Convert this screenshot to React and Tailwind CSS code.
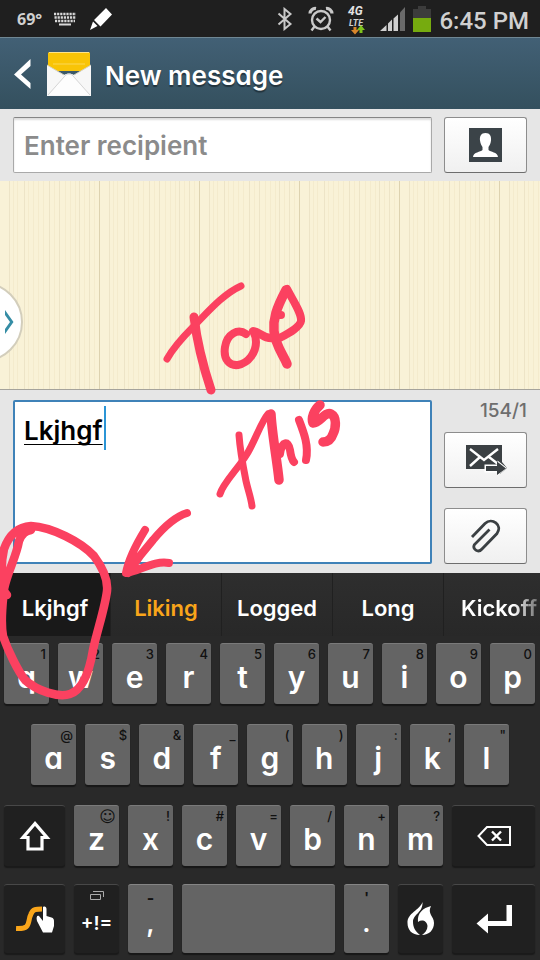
import React, { useState } from "react";

const SUGGESTIONS = ["Lkjhgf", "Liking", "Logged", "Long", "Kickoff"];

const ROW_ONE = [
  ["q", "1"], ["w", "2"], ["e", "3"], ["r", "4"], ["t", "5"],
  ["y", "6"], ["u", "7"], ["i", "8"], ["o", "9"], ["p", "0"],
];
const ROW_TWO = [
  ["a", "@"], ["s", "$"], ["d", "&"], ["f", "_"], ["g", "("],
  ["h", ")"], ["j", ":"], ["k", ";"], ["l", '"'],
];
const ROW_THREE = [
  ["z", "☺"], ["x", "!"], ["c", "#"], ["v", "="], ["b", "/"], ["n", "+"], ["m", "?"],
];

function StatusBar() {
  return (
    <div className="flex h-[37px] items-center bg-[#1f1f1f] pl-[17px] pr-[11px] text-[#d0d0d0]">
      <span className="w-[36px] font-['Liberation_Sans_Narrow','Open_Sans',sans-serif] text-base font-bold">69°</span>
      <svg className="mr-[12px]" width="24" height="14" viewBox="0 0 24 14" fill="none" stroke="#d8d8d8">
        <path d="M1 2h22M1.500 5.500h21M2 9h20" strokeWidth="2.400" strokeDasharray="2.200 .9" />
        <path d="M6 12.500h12" strokeWidth="2" />
      </svg>
      <svg width="24" height="24" viewBox="0 0 24 24" fill="#fff">
        <path d="M17 1l6 6.500-11.500 12L5 13zM4 14.500L8.500 19 1 23z" />
      </svg>
      <div className="ml-auto flex items-center">
        <svg className="mr-[15px]" width="16" height="24" viewBox="0 0 16 24" fill="none" stroke="#c9c9c9" strokeWidth="2">
          <path d="M1.500 6.500l12 10.500-6 5V2l6 5-12 10.500" />
        </svg>
        <svg className="mr-[13px]" width="26" height="26" viewBox="0 0 26 26" fill="none" stroke="#c9c9c9" strokeWidth="2.400">
          <circle cx="13" cy="14" r="9" />
          <path d="M8.500 12.500l4 3.500 5-5M6.500 20.500l-3 4M19.500 20.500l3 4" />
          <path d="M2 7.500c0-3 3-5.500 6-5M24 7.500c0-3-3-5.500-6-5" strokeWidth="3.200" />
        </svg>
        <svg className="mr-[13px]" width="20" height="34" viewBox="0 0 20 34">
          <text x="1" y="13" fontSize="12" fontWeight="700" fontStyle="italic" fill="#e2e2e2" fontFamily="Roboto, sans-serif">4G</text>
          <text x="2" y="24" fontSize="9" fontWeight="700" fontStyle="italic" fill="#d0d0d0" fontFamily="Roboto, sans-serif">LTE</text>
          <path d="M6.500 25h3v3H12l-4 4.500L4 28h2.500z" fill="#d9862b" />
          <path d="M12.500 31v-3H10l4-5 4 5h-2.500v3z" fill="#7fc21c" />
        </svg>
        <svg className="mr-[7px]" width="26" height="26" viewBox="0 0 26 26" fill="#cfcfcf">
          <path d="M0 25l6.500-6v6zM8 17.500l4-4V25H8zM13.500 12.500l4.500-4V25h-4.500z" />
          <path d="M20 6.500L25 1v24h-5z" fill="#6a6a6a" />
        </svg>
        <svg className="mr-[8px]" width="18" height="28" viewBox="0 0 18 28">
          <path d="M0 4h5V1h8v3h5v9H0z" fill="#3c3c3c" />
          <path d="M0 13h18v14H0z" fill="#76ab0f" />
        </svg>
        <span className="pt-[4px] font-[Roboto,sans-serif] text-2xl font-medium leading-8">6:45 PM</span>
      </div>
    </div>
  );
}

function Header() {
  return (
    <header className="flex h-[72px] items-center border-t border-[#6f8793] bg-linear-to-b from-[#426075] to-[#34505e] pl-[13px]">
      <button aria-label="Back" className="mr-[15px]">
        <svg width="19" height="32" viewBox="0 0 19 32" fill="#fff">
          <path d="M17.500 1v7L8 16.500l9.500 8.500v6L1 16.500z" />
        </svg>
      </button>
      <svg width="44" height="46" viewBox="0 0 44 46">
        <path d="M2 1h40l1 1v18H1V2z" fill="#f9c406" />
        <path d="M2 1h40v1H2z" fill="#ffe489" />
        <path d="M6 13h32" stroke="#fbd857" />
        <path d="M0 14l17 10c3-2 7-2 10 0l17-10v31H0z" fill="#f7f7f7" />
        <path d="M1 44l16-18c3-4 7-4 10 0l16 18" fill="#fdfdfd" stroke="#d5d5d5" />
        <path d="M0 14l17 10M44 14L27 24" stroke="#d6d2c0" />
      </svg>
      <h1 className="ml-[14px] pt-[4px] text-[26px] font-semibold text-white [text-shadow:0_2px_1px_rgb(0_0_0/0.4)]">New message</h1>
    </header>
  );
}

function SideButton({ label, children }) {
  return (
    <button
      aria-label={label}
      className="flex h-14 w-[83px] shrink-0 items-center justify-center rounded-[3px] border border-[#8d8d8d] border-b-[#6d6d6d] bg-linear-to-b from-white to-[#f0f0f0]"
    >
      {children}
    </button>
  );
}

function Conversation() {
  return (
    <main className="relative h-[208px] overflow-hidden bg-[#f9f2d7]">
      <svg className="h-full w-full" aria-hidden="true">
        <defs>
          <pattern id="stripes" width="100" height="208" patternUnits="userSpaceOnUse">
            <path d="M9.500 0v208M24.500 0v208M49.500 0v208M59.500 0v208M79.500 0v208M89.500 0v208" stroke="#ede4c7" />
            <path d="M13.500 0v208M17.500 0v208M28.500 0v208M33.500 0v208M38.500 0v208M43.500 0v208M54.500 0v208M65.500 0v208M70.500 0v208M75.500 0v208M84.500 0v208M94.500 0v208" stroke="#f4ebcd" />
            <path d="M99.500 0v208" stroke="#ddd2b0" />
          </pattern>
        </defs>
        <rect width="100%" height="100%" fill="url(#stripes)" />
      </svg>
      <button
        aria-label="Open panel"
        className="absolute -left-[57px] top-[101px] flex h-20 w-20 items-center justify-end rounded-full border-2 border-[#d3cebc] bg-white pr-[7px]"
      >
        <svg width="10" height="26" viewBox="0 0 10 26" fill="#358da5">
          <path d="M1 1l8.500 12L1 25v-5l5-7-5-7z" />
        </svg>
      </button>
    </main>
  );
}

function Compose() {
  const [text, setText] = useState("Lkjhgf");
  return (
    <section className="flex gap-[12px] border-t border-[#a5a39c] bg-[#e6e6e6] px-[13px] pb-[9px] pt-[10px]">
      <div className="relative flex-1">
        <textarea
          aria-label="Message"
          spellCheck={false}
          value={text}
          onChange={(e) => setText(e.target.value)}
          className="block h-[164px] w-full resize-none rounded-[2px] border-2 border-[#3f82b8] bg-white px-[9px] py-[12px] text-[26px] font-semibold leading-[34px] text-black underline decoration-1 underline-offset-4 outline-none [text-decoration-skip-ink:none]"
        />
        <span className="absolute left-[91px] top-[6px] h-[44px] w-[2px] bg-[#2b95d6]" />
      </div>
      <div className="flex flex-col">
        <span className="h-[32px] text-right text-[19px] font-medium leading-[22px] text-[#6e6e6e]">154/1</span>
        <SideButton label="Send">
          <svg width="42" height="32" viewBox="0 0 42 32">
            <path d="M1 1h36v17l5 6-7 6v-3H20v-2H1z" fill="#3b4043" />
            <path d="M5 5l14 11L33 5M5 22l10-9M24 13l9 7" fill="none" stroke="#fff" strokeWidth="2.400" />
            <path d="M19.500 20.500h13v-4L42 24l-9.500 8v-3.500h-13z" fill="#fff" />
            <path d="M21 22h11v-4.500l9 7-9 6.500v-4H21z" fill="#3b4043" />
          </svg>
        </SideButton>
        <div className="mt-5">
          <SideButton label="Attach">
            <svg width="32" height="34" viewBox="0 0 32 34" fill="none" stroke="#3b4043" strokeWidth="2.800">
              <path d="M2 18L15 4.500C22-2 33 6 27 14.500L12 30c-4 4.500-10 0-7.500-4.500L19.500 10.500" />
            </svg>
          </SideButton>
        </div>
      </div>
    </section>
  );
}

function Key({ letter, alt }) {
  return (
    <button className="flex h-[61px] min-w-0 flex-[45] flex-col rounded-[3px] border-t border-[#7a7a7a] bg-[#646464] pt-[3px] shadow-[0_2px_1px_#171717]">
      <span
        className={`self-end pr-[3px] leading-[15px] text-[#111] ${
          alt === "☺" ? "font-['DejaVu_Sans',sans-serif] text-base" : "text-[13px] font-medium"
        }`}
      >
        {alt}
      </span>
      <span className="self-center text-[30px] font-semibold leading-[30px] text-white">{letter}</span>
    </button>
  );
}

function Keyboard() {
  const darkKey = "flex min-w-0 items-center justify-center rounded-[3px] border-t border-[#484848] bg-[#202020] shadow-[0_2px_1px_#1a1a1a]";
  const lightKey = "flex min-w-0 flex-col items-center rounded-[3px] border-t border-[#858585] bg-[#646464] shadow-[0_2px_1px_#171717]";
  return (
    <section className="bg-[#292929] pb-[7px]">
      <div className="flex h-[63px] overflow-hidden bg-linear-to-b from-[#2e2e2e] to-[#282828]">
        {SUGGESTIONS.map((word, i) => (
          <button
            key={word}
            className={`shrink-0 basis-[111px] border-r border-[#202020] pt-[7px] text-[22px] font-semibold ${
              i === 0 ? "bg-[#191919] text-white" : i === 1 ? "text-[#f9a51a]" : "text-white"
            } ${i === 4 ? "[mask-image:linear-gradient(to_right,#000_62%,#0006_82%)]" : ""}`}
          >
            {word}
          </button>
        ))}
      </div>

      <div className="flex flex-col gap-5 pt-[7px]">
        <div className="flex gap-[9px] pl-1 pr-[5px]">
          {ROW_ONE.map(([letter, alt]) => <Key key={letter} letter={letter} alt={alt} />)}
        </div>
        <div className="flex gap-[9px] px-[31px]">
          {ROW_TWO.map(([letter, alt]) => <Key key={letter} letter={letter} alt={alt} />)}
        </div>
        <div className="flex gap-[9px] pl-1 pr-[5px]">
          <button aria-label="Shift" className={`${darkKey} h-[61px] flex-[61]`}>
            <svg width="32" height="32" viewBox="0 0 32 32" fill="none" stroke="#fff" strokeWidth="3.200">
              <path d="M16 3.500L4 17.500h5V29h14V17.500h5z" />
            </svg>
          </button>
          {ROW_THREE.map(([letter, alt]) => <Key key={letter} letter={letter} alt={alt} />)}
          <button aria-label="Delete" className={`${darkKey} h-[61px] flex-[83]`}>
            <svg width="34" height="20" viewBox="0 0 34 20" fill="none" stroke="#fff" strokeWidth="2">
              <path d="M10 1h23v18H10L1.500 10z" />
              <path d="M15 5.500l9 9M24 5.500l-9 9" strokeWidth="2.400" />
            </svg>
          </button>
        </div>
      </div>

      <div className="mt-[18px] flex h-[69px] gap-[9px] pl-1 pr-[5px]">
        <button aria-label="Swype" className={`${darkKey} flex-[61]`}>
          <svg width="38" height="28" viewBox="0 0 38 28">
            <path d="M0 23.500c16 1 11-7 15-14.500C17 4 20 4 26 4" fill="none" stroke="#f9a51a" strokeWidth="5" />
            <path d="M27 2c2-1 3.500 0 3.500 2v7l5 1.500c2 .6 2.500 2 2.500 4V21l-2 6.500h-9L21 16c-1-4 0-6 2-5l4 5z" fill="#fff" />
          </svg>
        </button>
        <button aria-label="Symbols" className={`${darkKey} flex-[45] flex-col pb-[8px]`}>
          <svg className="mb-[9px]" width="14" height="9" viewBox="0 0 14 9" fill="none" stroke="#aaa">
            <path d="M.5 3.500h10v5H.5zM3 .5h10.500V6" />
          </svg>
          <span className="text-[19px] font-semibold leading-[30px] text-white">+!=</span>
        </button>
        <button className={`${lightKey} flex-[45] pt-[4px]`}>
          <span className="text-base font-bold leading-[18px] text-[#111]">-</span>
          <span className="text-[26px] font-semibold leading-8 text-white">,</span>
        </button>
        <button aria-label="Space" className={`${lightKey} flex-[153]`} />
        <button className={`${lightKey} flex-[45] pt-[4px]`}>
          <span className="text-sm font-bold leading-[18px] text-[#111]">'</span>
          <span className="text-[26px] font-semibold leading-8 text-white">.</span>
        </button>
        <button aria-label="Voice input" className={`${darkKey} flex-[45]`}>
          <svg width="28" height="34" viewBox="0 0 28 34" fill="#fff">
            <path d="M15.500 0C13 8 0 11 .5 21 .5 28 5 33 13 33 8 29 6 25 6 20 6 12 16 11 15.500 0z" />
            <path d="M24 4C16 6 10 11 11 20c4-3 9-1 9.500 4 0 4-2.500 7-5.500 9 7 0 12-5 12-12 0-7-7-9-3-17z" />
          </svg>
        </button>
        <button aria-label="Enter" className={`${darkKey} flex-[83]`}>
          <svg width="36" height="30" viewBox="0 0 36 30" fill="#fff">
            <path d="M30.500 1H36v21H12v7.500L.5 19.500 12 9.500V17h18.500z" />
          </svg>
        </button>
      </div>
    </section>
  );
}

// Freehand marker strokes drawn over the whole screen
function Scribble() {
  return (
    <svg
      className="pointer-events-none absolute left-0 top-0 w-full"
      viewBox="0 0 540 960"
      fill="none"
      stroke="#fb4160"
      strokeLinecap="round"
      strokeLinejoin="round"
      aria-hidden="true"
    >
      <g strokeWidth="7">
        <path d="M167 359C172 350 182 338 193 327C207 313 223 294 241 286" />
        <path d="M239 435C240 450 244 471 246 481C248 490 251 498 252 506" />
        <path d="M220 494C223 483 238 469 247 454C255 441 261 422 268 414" />
        <path d="M299 420C304 433 309 446 306 460" strokeWidth="8" />
      </g>
      <g strokeWidth="8">
        <path d="M194 317C197 342 205 372 211 390" strokeWidth="9" />
        <path d="M246 334C238 328 227 334 225 347C223 360 230 366 238 365C249 363 256 352 256 342C256 336 254 333 253 331C260 331 263 340 275 338" />
        <path d="M287 289C295 304 302 314 301 321C300 328 285 335 276 340M276 315h5" />
        <path d="M280 454C282 440 288 441 290 450C291 457 292 460 294 462" />
      </g>
      <g strokeWidth="9.500">
        <path d="M286 290C276 309 273 319 274 331C275 345 284 356 287 364" />
        <path d="M271 414C272 434 277 460 279 480" />
        <path d="M320 405C314 410 311 418 313 423C319 424 325 411 331 414C337 417 336 428 333 434C331 440 327 442 323 442" />
      </g>
      <path d="M187 513C174 517 163 528 153 540C145 549 137 559 128 573M145 530C137 543 129 557 126 573C139 571 155 560 169 563" strokeWidth="8" />
      <path
        d="M7 595C0 588 1 562 4 549C9 535 17 527 31 526C52 527 81 542 94 556C103 568 108 581 107 591C105 608 97 631 93 650C89 674 82 690 70 694C59 698 37 691 25 680C18 671 8 651 3 636C0 620 3 602 4 589C8 570 16 558 19 541C22 533 26 531 31 530"
        strokeWidth="8.500"
      />
    </svg>
  );
}

export default function App() {
  return (
    <div className="relative w-full overflow-hidden bg-[#292929] font-[Inter,'Noto_Sans',sans-serif] [font-feature-settings:'cv11']">
      <StatusBar />
      <Header />
      <div className="flex gap-[12px] bg-[#e6e6e6] px-[13px] py-2">
        <input
          aria-label="Recipient"
          placeholder="Enter recipient"
          className="h-14 min-w-0 flex-1 rounded-[2px] border border-[#a9a9a9] border-t-[#858585] bg-white px-[10px] text-[26px] font-semibold shadow-[inset_0_2px_2px_#ddd] outline-none placeholder:text-[#8b8b8b]"
        />
        <SideButton label="Contacts">
          <svg width="33" height="34" viewBox="0 0 33 34">
            <path d="M0 0h33v34H0z" fill="#3b4348" />
            <path d="M16.500 5c4.500 0 6 3.500 5.500 7.500-.4 3.500-1.500 5-2.500 6.500v3c2 2 9 2 9.500 7H4c.5-5 7.500-5 9.500-7v-3c-1-1.500-2-3-2.500-6.500C10.500 8.500 12 5 16.500 5z" fill="#fff" />
          </svg>
        </SideButton>
      </div>
      <Conversation />
      <Compose />
      <Keyboard />
      <Scribble />
    </div>
  );
}
